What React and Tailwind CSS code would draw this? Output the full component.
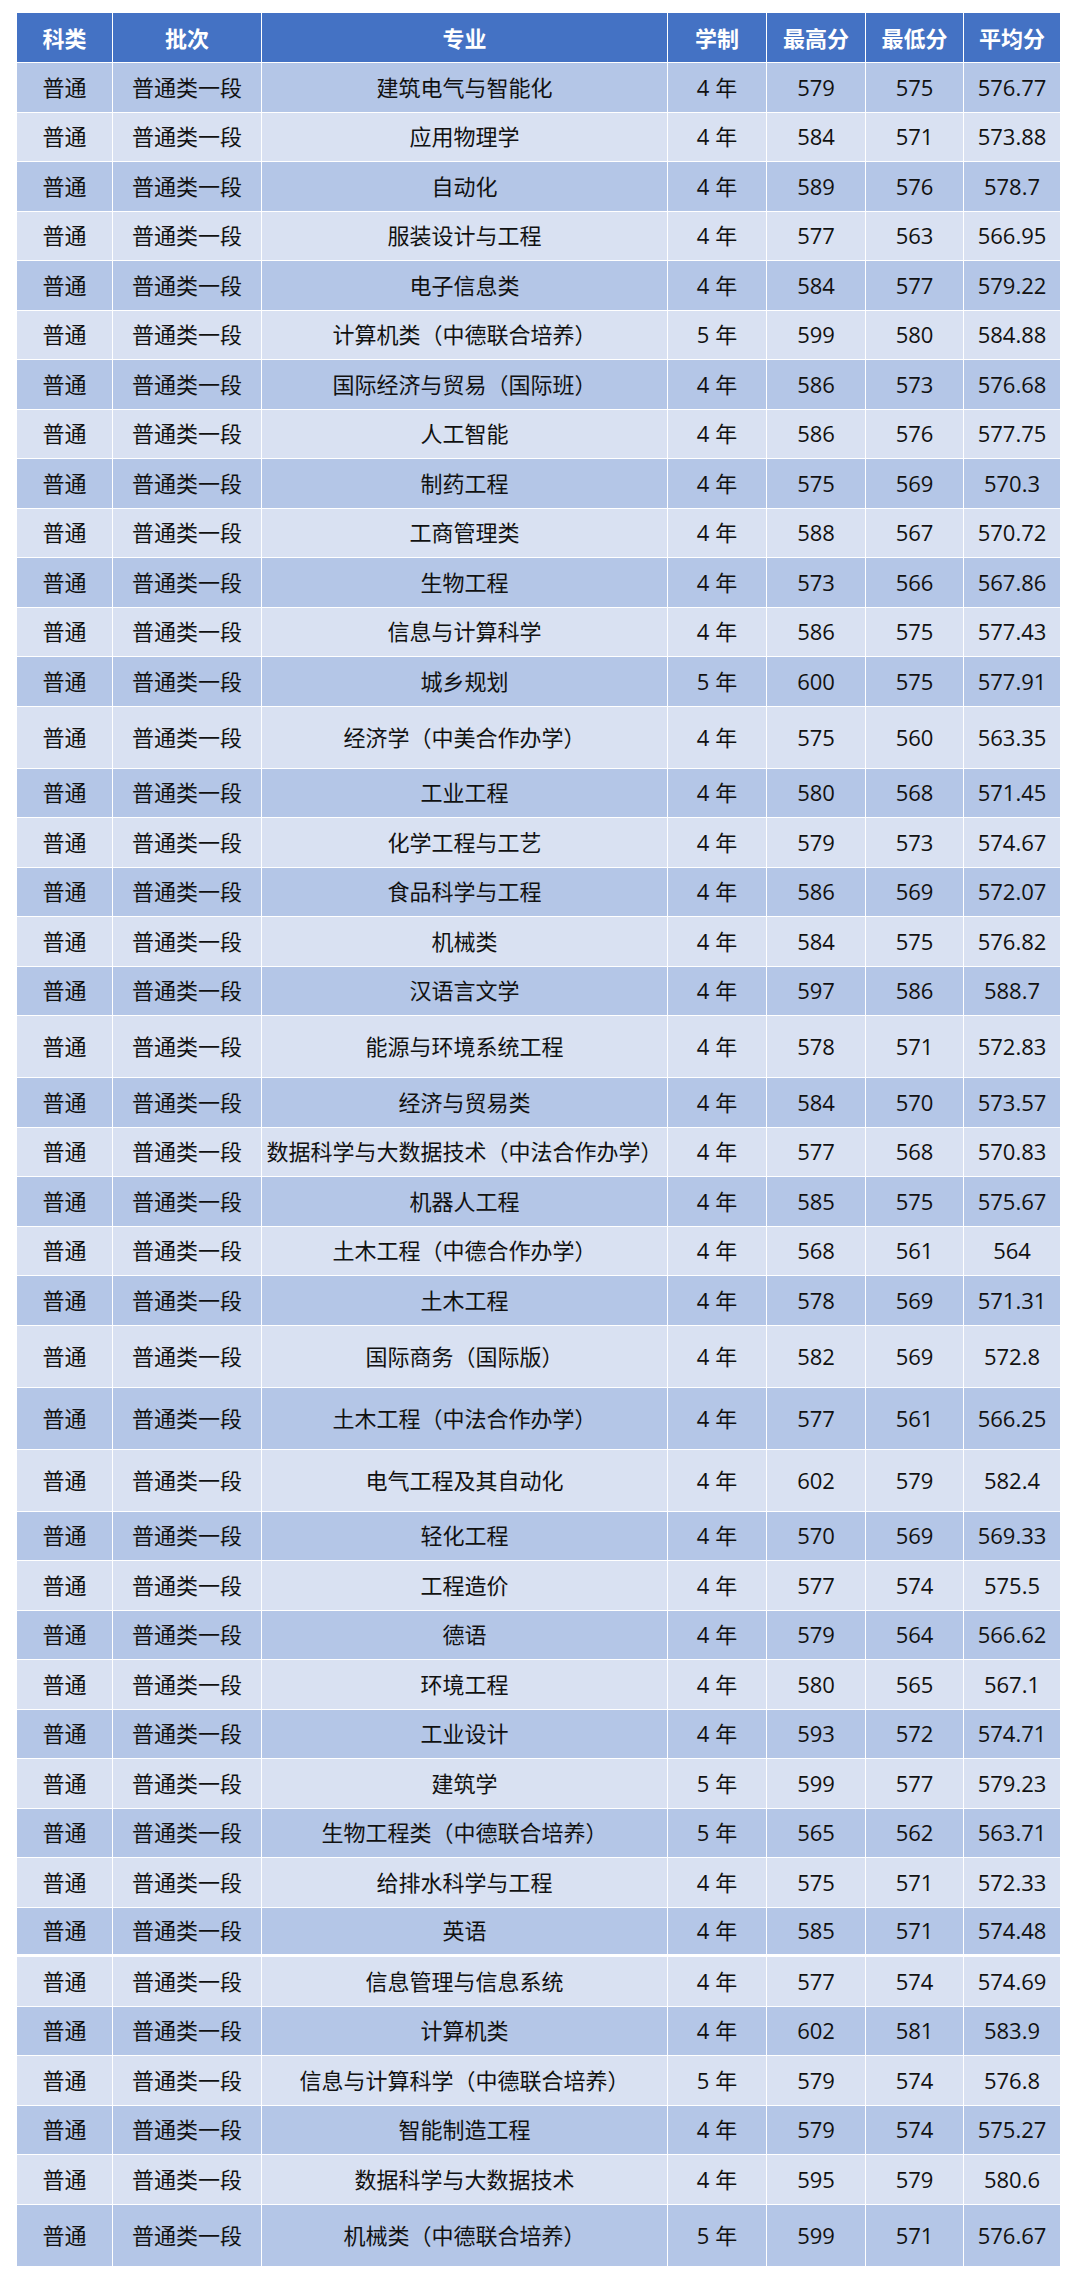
import React from 'react';

const rows = [
  ['建筑电气与智能化', 4, 579, 575, '576.77'],
  ['应用物理学', 4, 584, 571, '573.88'],
  ['自动化', 4, 589, 576, '578.7'],
  ['服装设计与工程', 4, 577, 563, '566.95'],
  ['电子信息类', 4, 584, 577, '579.22'],
  ['计算机类（中德联合培养）', 5, 599, 580, '584.88'],
  ['国际经济与贸易（国际班）', 4, 586, 573, '576.68'],
  ['人工智能', 4, 586, 576, '577.75'],
  ['制药工程', 4, 575, 569, '570.3'],
  ['工商管理类', 4, 588, 567, '570.72'],
  ['生物工程', 4, 573, 566, '567.86'],
  ['信息与计算科学', 4, 586, 575, '577.43'],
  ['城乡规划', 5, 600, 575, '577.91'],
  ['经济学（中美合作办学）', 4, 575, 560, '563.35', 'tall'],
  ['工业工程', 4, 580, 568, '571.45'],
  ['化学工程与工艺', 4, 579, 573, '574.67'],
  ['食品科学与工程', 4, 586, 569, '572.07'],
  ['机械类', 4, 584, 575, '576.82'],
  ['汉语言文学', 4, 597, 586, '588.7'],
  ['能源与环境系统工程', 4, 578, 571, '572.83', 'tall'],
  ['经济与贸易类', 4, 584, 570, '573.57'],
  ['数据科学与大数据技术（中法合作办学）', 4, 577, 568, '570.83'],
  ['机器人工程', 4, 585, 575, '575.67'],
  ['土木工程（中德合作办学）', 4, 568, 561, '564'],
  ['土木工程', 4, 578, 569, '571.31'],
  ['国际商务（国际版）', 4, 582, 569, '572.8', 'tall'],
  ['土木工程（中法合作办学）', 4, 577, 561, '566.25', 'tall'],
  ['电气工程及其自动化', 4, 602, 579, '582.4', 'tall'],
  ['轻化工程', 4, 570, 569, '569.33'],
  ['工程造价', 4, 577, 574, '575.5'],
  ['德语', 4, 579, 564, '566.62'],
  ['环境工程', 4, 580, 565, '567.1'],
  ['工业设计', 4, 593, 572, '574.71'],
  ['建筑学', 5, 599, 577, '579.23'],
  ['生物工程类（中德联合培养）', 5, 565, 562, '563.71'],
  ['给排水科学与工程', 4, 575, 571, '572.33'],
  ['英语', 4, 585, 571, '574.48', 'gap'],
  ['信息管理与信息系统', 4, 577, 574, '574.69'],
  ['计算机类', 4, 602, 581, '583.9'],
  ['信息与计算科学（中德联合培养）', 5, 579, 574, '576.8'],
  ['智能制造工程', 4, 579, 574, '575.27'],
  ['数据科学与大数据技术', 4, 595, 579, '580.6'],
  ['机械类（中德联合培养）', 5, 599, 571, '576.67', 'tall'],
];

const cols = 'grid grid-cols-[96px_149px_406px_99px_99px_98px_96px]';
const cell = 'flex items-center justify-center border-r border-white last:border-r-0 whitespace-nowrap';

const headers = ['科类', '批次', '专业', '学制', '最高分', '最低分', '平均分'];

export default function App() {
  return (
    <div className="w-[1080px] h-[2279px] bg-white pt-[13px] pl-[17px] font-['Open_Sans','Noto_Sans_CJK_SC',sans-serif] text-[22px] text-[#111]">
      <div className="w-[1043px] flex flex-col">
        <div className={`${cols} h-[50px] bg-[#4472c4] text-white font-bold border-b border-white font-['Noto_Sans_CJK_SC',sans-serif]`}>
          {headers.map((h) => (
            <div key={h} className={cell}>{h}</div>
          ))}
        </div>
        {rows.map((r, i) => {
          const [major, years, hi, lo, avg, flag] = r;
          const bg = i % 2 === 0 ? 'bg-[#b4c6e7]' : 'bg-[#d9e1f2]';
          const height = flag === 'tall' ? 'h-[62px]' : 'h-[49.5px]';
          const bottom = flag === 'gap' ? 'border-b-[3px]' : 'border-b';
          return (
            <div key={i} className={`${cols} ${height} ${bg} ${bottom} border-white`}>
              <div className={cell}>普通</div>
              <div className={cell}>普通类一段</div>
              <div className={cell}>{major}</div>
              <div className={cell}>{years} 年</div>
              <div className={cell}>{hi}</div>
              <div className={cell}>{lo}</div>
              <div className={cell}>{avg}</div>
            </div>
          );
        })}
      </div>
    </div>
  );
}
